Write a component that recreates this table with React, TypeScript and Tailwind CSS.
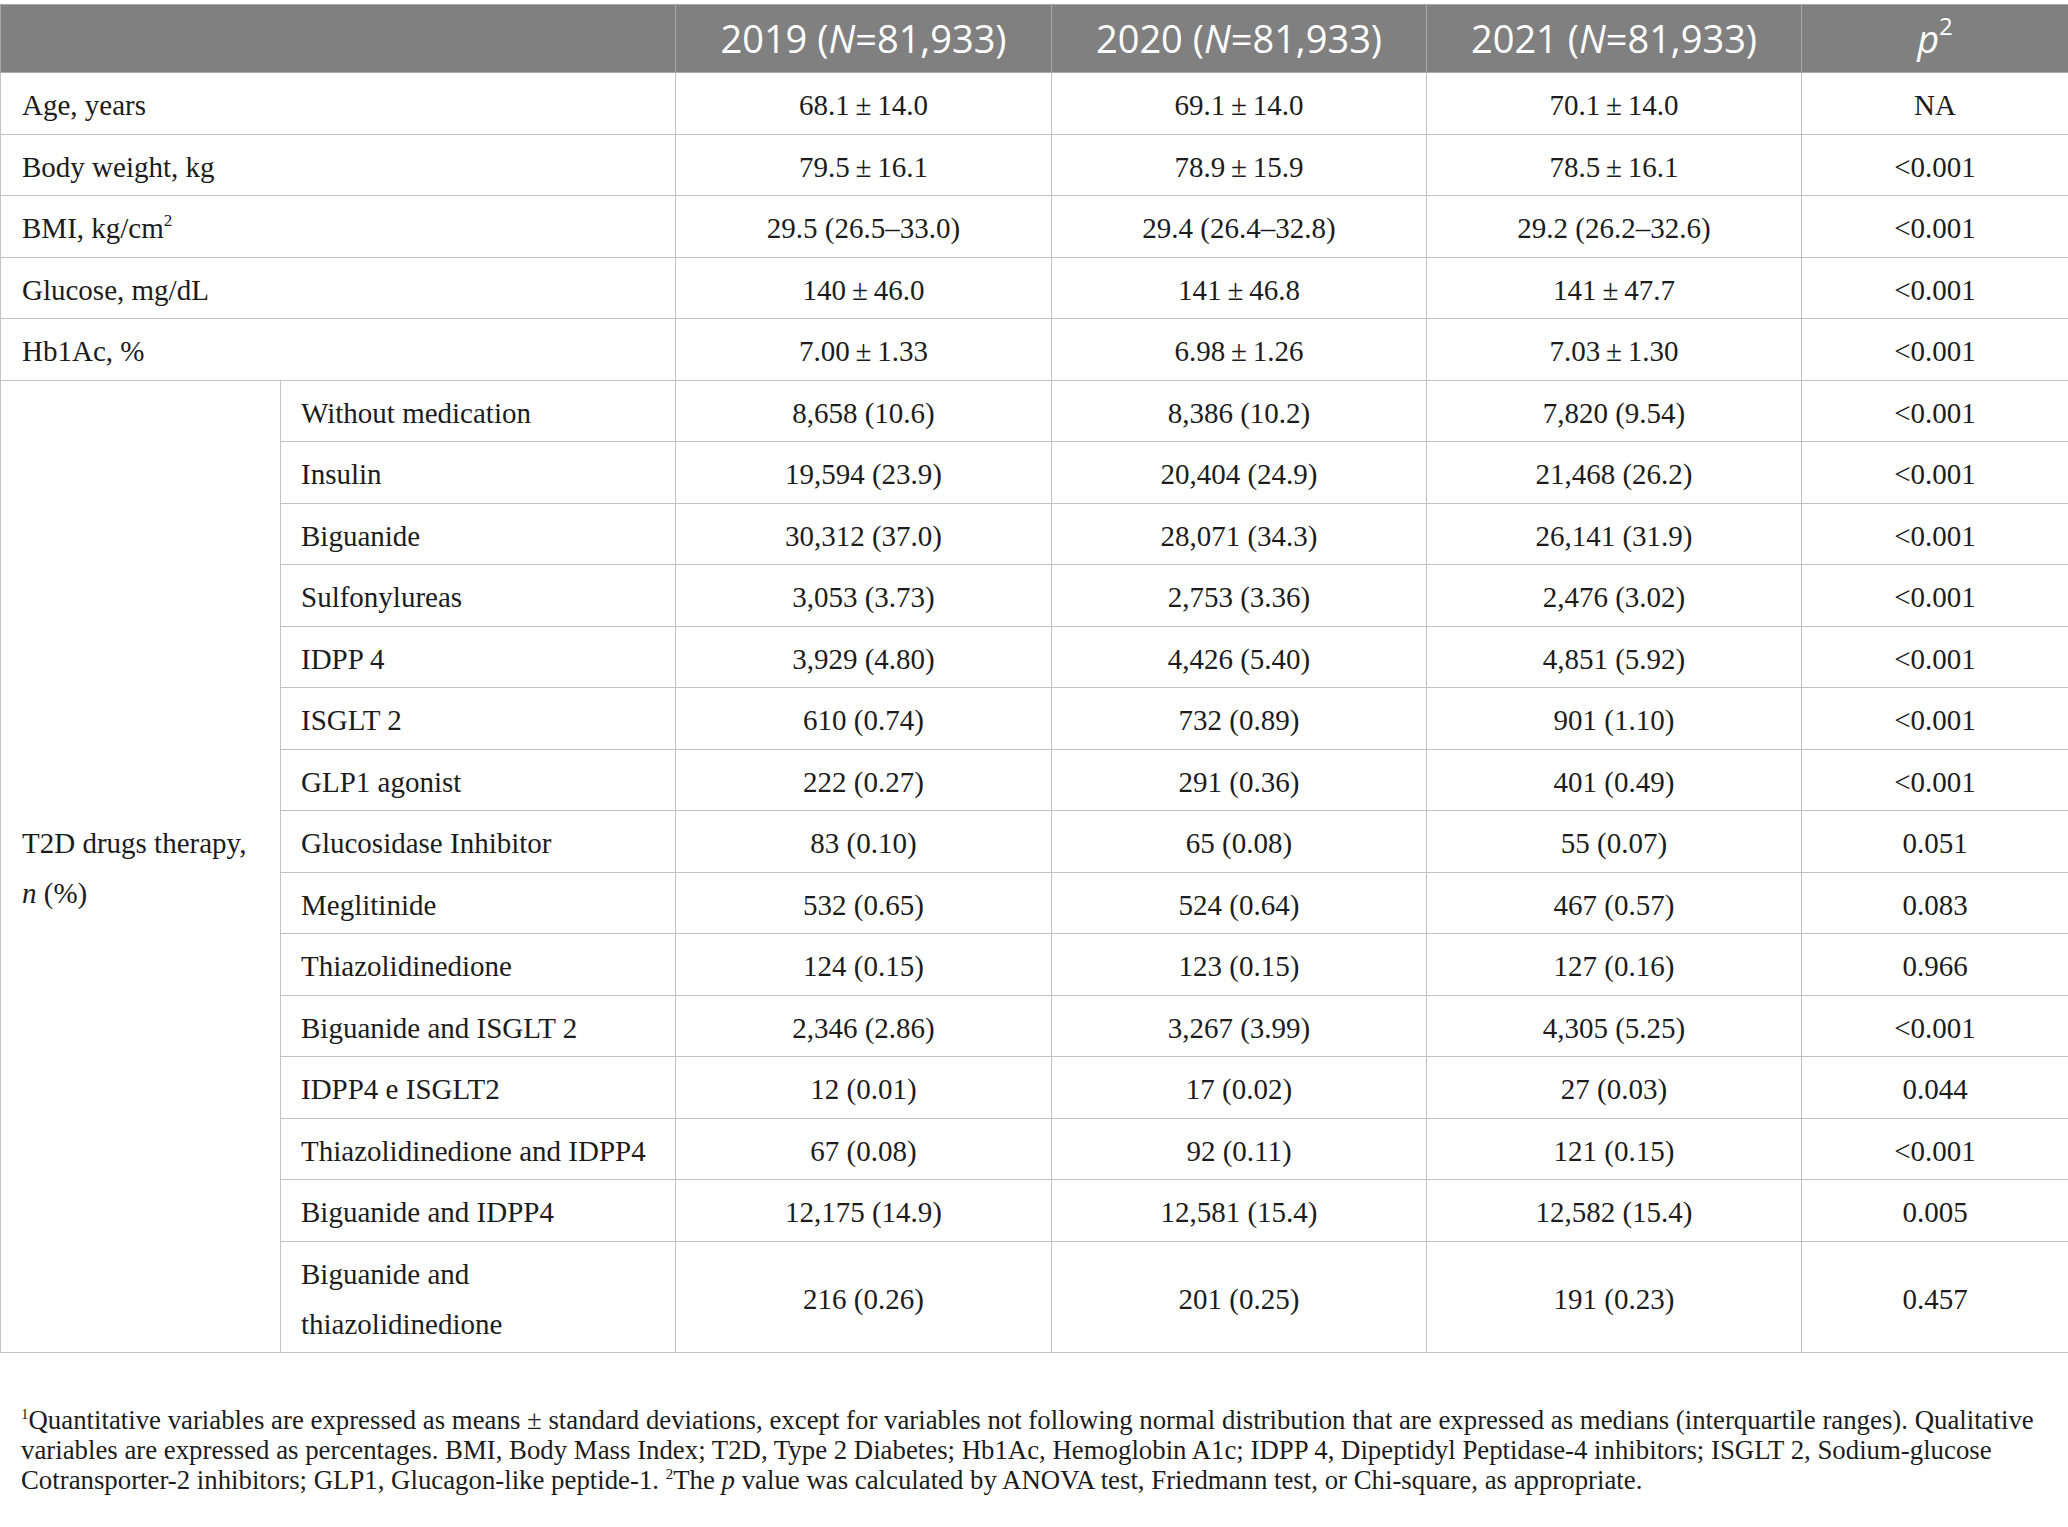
const serif = "font-['Liberation_Serif','Times_New_Roman',serif]";

const topRows = [
  { label: "Age, years", v: ["68.1\u2009±\u200914.0", "69.1\u2009±\u200914.0", "70.1\u2009±\u200914.0"], p: "NA" },
  { label: "Body weight, kg", v: ["79.5\u2009±\u200916.1", "78.9\u2009±\u200915.9", "78.5\u2009±\u200916.1"], p: "<0.001" },
  { label: "BMI", v: ["29.5 (26.5–33.0)", "29.4 (26.4–32.8)", "29.2 (26.2–32.6)"], p: "<0.001" },
  { label: "Glucose, mg/dL", v: ["140\u2009±\u200946.0", "141\u2009±\u200946.8", "141\u2009±\u200947.7"], p: "<0.001" },
  { label: "Hb1Ac, %", v: ["7.00\u2009±\u20091.33", "6.98\u2009±\u20091.26", "7.03\u2009±\u20091.30"], p: "<0.001" },
];

const drugRows = [
  { label: "Without medication", v: ["8,658 (10.6)", "8,386 (10.2)", "7,820 (9.54)"], p: "<0.001" },
  { label: "Insulin", v: ["19,594 (23.9)", "20,404 (24.9)", "21,468 (26.2)"], p: "<0.001" },
  { label: "Biguanide", v: ["30,312 (37.0)", "28,071 (34.3)", "26,141 (31.9)"], p: "<0.001" },
  { label: "Sulfonylureas", v: ["3,053 (3.73)", "2,753 (3.36)", "2,476 (3.02)"], p: "<0.001" },
  { label: "IDPP 4", v: ["3,929 (4.80)", "4,426 (5.40)", "4,851 (5.92)"], p: "<0.001" },
  { label: "ISGLT 2", v: ["610 (0.74)", "732 (0.89)", "901 (1.10)"], p: "<0.001" },
  { label: "GLP1 agonist", v: ["222 (0.27)", "291 (0.36)", "401 (0.49)"], p: "<0.001" },
  { label: "Glucosidase Inhibitor", v: ["83 (0.10)", "65 (0.08)", "55 (0.07)"], p: "0.051" },
  { label: "Meglitinide", v: ["532 (0.65)", "524 (0.64)", "467 (0.57)"], p: "0.083" },
  { label: "Thiazolidinedione", v: ["124 (0.15)", "123 (0.15)", "127 (0.16)"], p: "0.966" },
  { label: "Biguanide and ISGLT 2", v: ["2,346 (2.86)", "3,267 (3.99)", "4,305 (5.25)"], p: "<0.001" },
  { label: "IDPP4 e ISGLT2", v: ["12 (0.01)", "17 (0.02)", "27 (0.03)"], p: "0.044" },
  { label: "Thiazolidinedione and IDPP4", v: ["67 (0.08)", "92 (0.11)", "121 (0.15)"], p: "<0.001" },
  { label: "Biguanide and IDPP4", v: ["12,175 (14.9)", "12,581 (15.4)", "12,582 (15.4)"], p: "0.005" },
  { label: "Biguanide and thiazolidinedione", v: ["216 (0.26)", "201 (0.25)", "191 (0.23)"], p: "0.457" },
];

const cell = "border border-[#c2c2c2] pt-[7px] pb-[3.5px] leading-[50px] align-middle";
const head = "border border-[#a9a9a9] h-[68px] p-0 text-center font-normal align-middle";

function Label({ text }: { text: string }) {
  if (text === "BMI") {
    return (
      <>
        BMI, kg/cm<sup className="text-[17px] -top-[0.7em]">2</sup>
      </>
    );
  }
  if (text === "Biguanide and thiazolidinedione") {
    return (
      <>
        Biguanide and
        <br />
        thiazolidinedione
      </>
    );
  }
  return <>{text}</>;
}

function Header({ year }: { year: string }) {
  return (
    <th className={head}>
      {year} (<i>N</i>=81,933)
    </th>
  );
}

export default function App() {
  return (
    <div className={`w-[2068px] min-h-[1527px] bg-white pt-[4px] text-[#1c1c1c] ${serif}`}>
      <table className="w-[2068px] table-fixed border-collapse text-[29px]">
        <colgroup>
          <col className="w-[280px]" />
          <col className="w-[395px]" />
          <col className="w-[376px]" />
          <col className="w-[375px]" />
          <col className="w-[375px]" />
          <col className="w-[267px]" />
        </colgroup>
        <thead>
          <tr className="bg-[#808080] text-white font-['Open_Sans',sans-serif] text-[38px] border-t border-[#c2c2c2]">
            <th colSpan={2} className={head} />
            <Header year="2019" />
            <Header year="2020" />
            <Header year="2021" />
            <th className={head}>
              <i>p</i>
              <sup className="text-[24px] -top-[0.75em]">2</sup>
            </th>
          </tr>
        </thead>
        <tbody>
          {topRows.map((r) => (
            <tr key={r.label}>
              <td colSpan={2} className={`${cell} pl-[21px] text-left`}>
                <Label text={r.label} />
              </td>
              {r.v.map((v, i) => (
                <td key={i} className={`${cell} text-center`}>
                  {v}
                </td>
              ))}
              <td className={`${cell} text-center`}>{r.p}</td>
            </tr>
          ))}
          {drugRows.map((r, idx) => (
            <tr key={r.label}>
              {idx === 0 && (
                <td rowSpan={drugRows.length} className={`${cell} pl-[21px] text-left`}>
                  T2D drugs therapy,
                  <br />
                  <i>n</i> (%)
                </td>
              )}
              <td className={`${cell} pl-[20px] text-left`}>
                <Label text={r.label} />
              </td>
              {r.v.map((v, i) => (
                <td key={i} className={`${cell} text-center`}>
                  {v}
                </td>
              ))}
              <td className={`${cell} text-center`}>{r.p}</td>
            </tr>
          ))}
        </tbody>
      </table>

      <p className="mt-[52px] px-[21px] text-[26.8px] leading-[30px] whitespace-nowrap">
        <sup className="text-[15px] -top-[0.7em]">1</sup>Quantitative variables are expressed as means ± standard deviations, except for variables not following normal distribution that are expressed as medians (interquartile ranges). Qualitative
        <br />
        variables are expressed as percentages. BMI, Body Mass Index; T2D, Type 2 Diabetes; Hb1Ac, Hemoglobin A1c; IDPP 4, Dipeptidyl Peptidase-4 inhibitors; ISGLT 2, Sodium-glucose
        <br />
        Cotransporter-2 inhibitors; GLP1, Glucagon-like peptide-1. <sup className="text-[15px] -top-[0.7em]">2</sup>The <i>p</i> value was calculated by ANOVA test, Friedmann test, or Chi-square, as appropriate.
      </p>
    </div>
  );
}
